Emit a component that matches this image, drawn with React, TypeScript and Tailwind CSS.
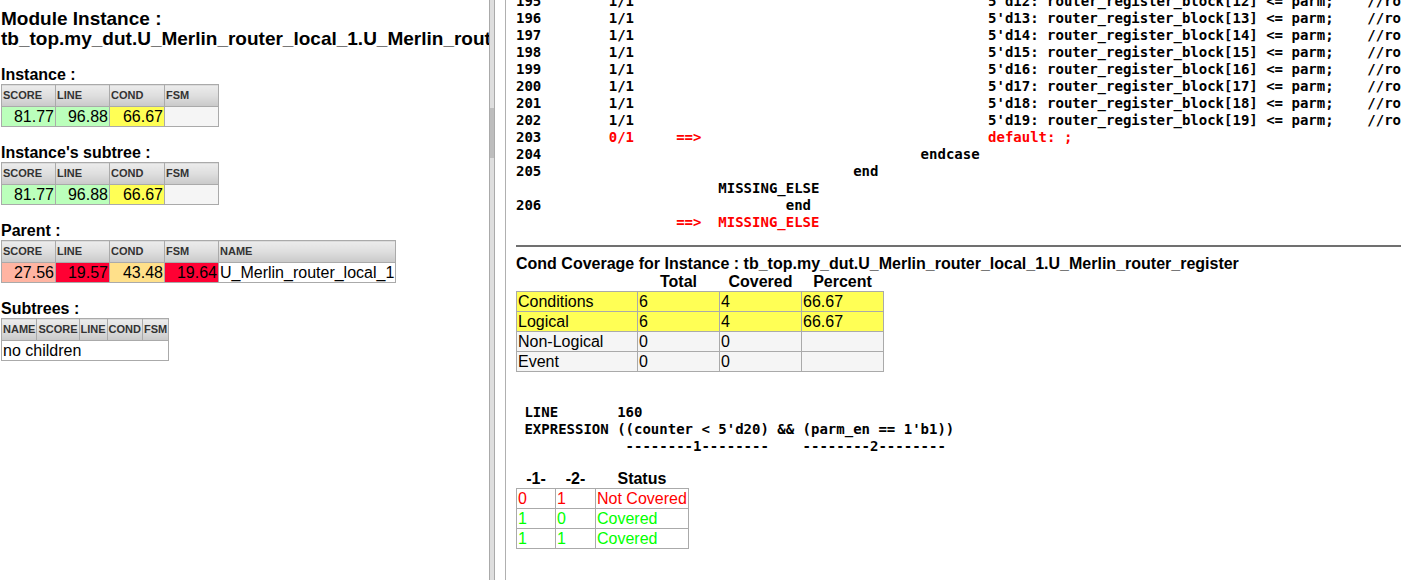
import React from "react";

const sans = "font-['Liberation_Sans',Arial,sans-serif]";
const mono = "font-['DejaVu_Sans_Mono',monospace]";

const sp = (n: number) => " ".repeat(n);
const pad = (s: string, n: number) => s.padEnd(n, " ");

type CodeRow = { no: string; cov: string; arrow?: boolean; code: string; red?: boolean };

const codeRows: CodeRow[] = [
  ...[12, 13, 14, 15, 16, 17, 18, 19].map((n, i) => ({
    no: String(195 + i),
    cov: "1/1",
    code: sp(32) + `5'd${n}: router_register_block[${n}] <= parm;    //router_register_block[${n}]`,
  })),
  { no: "203", cov: "0/1", arrow: true, code: sp(32) + "default: ;", red: true },
  { no: "204", cov: "", code: sp(24) + "endcase" },
  { no: "205", cov: "", code: sp(16) + "end" },
  { no: "", cov: "", code: "MISSING_ELSE" },
  { no: "206", cov: "", code: sp(8) + "end" },
  { no: "", cov: "", arrow: true, code: "MISSING_ELSE", red: true },
];

const thCls =
  "border border-[#aaaaaa] bg-gradient-to-b from-[#ececec] via-[#dedede] to-[#c9c9c9] text-left text-[11px] leading-[13px] font-bold text-[#333] px-[1px] py-[4px]";
const tdNum = "border border-[#aaaaaa] text-right text-[16px] leading-[19px] px-[1px]";

const Label = ({ children }: { children: React.ReactNode }) => (
  <div className="mt-[17px] text-[16px] leading-[18px] font-bold">{children}</div>
);

const ScoreTable = ({ parent }: { parent?: boolean }) => (
  <table className="border-collapse">
    <thead>
      <tr>
        <th className={`${thCls} w-[54px]`}>SCORE</th>
        <th className={`${thCls} w-[54px]`}>LINE</th>
        <th className={`${thCls} w-[55px]`}>COND</th>
        <th className={`${thCls} w-[54px]`}>FSM</th>
        {parent && <th className={thCls}>NAME</th>}
      </tr>
    </thead>
    <tbody>
      {parent ? (
        <tr>
          <td className={`${tdNum} bg-[#ffb4a2]`}>27.56</td>
          <td className={`${tdNum} bg-[#ff0033]`}>19.57</td>
          <td className={`${tdNum} bg-[#ffe08a]`}>43.48</td>
          <td className={`${tdNum} bg-[#ff0033]`}>19.64</td>
          <td className="border border-[#aaaaaa] text-left text-[16px] leading-[19px] px-[1px] bg-white">
            U_Merlin_router_local_1
          </td>
        </tr>
      ) : (
        <tr>
          <td className={`${tdNum} bg-[#bbffbb]`}>81.77</td>
          <td className={`${tdNum} bg-[#bbffbb]`}>96.88</td>
          <td className={`${tdNum} bg-[#ffff55]`}>66.67</td>
          <td className={`${tdNum} bg-[#f5f5f5]`}></td>
        </tr>
      )}
    </tbody>
  </table>
);

const condRows = [
  { name: "Conditions", total: "6", cov: "4", pct: "66.67", bg: "bg-[#ffff55]" },
  { name: "Logical", total: "6", cov: "4", pct: "66.67", bg: "bg-[#ffff55]" },
  { name: "Non-Logical", total: "0", cov: "0", pct: "", bg: "bg-[#f5f5f5]" },
  { name: "Event", total: "0", cov: "0", pct: "", bg: "bg-[#f5f5f5]" },
];

const statusRows = [
  { a: "0", b: "1", s: "Not Covered", c: "text-[#ff0000]" },
  { a: "1", b: "0", s: "Covered", c: "text-[#00ff00]" },
  { a: "1", b: "1", s: "Covered", c: "text-[#00ff00]" },
];

const cell = "border border-[#aaaaaa] text-left text-[16px] leading-[19px] px-[1px]";

export default function App() {
  return (
    <div className={`${sans} flex w-[1401px] h-[580px] overflow-hidden bg-white text-black`}>
      {/* left frame */}
      <div className="w-[489px] shrink-0 overflow-hidden whitespace-nowrap pl-[1px] pt-[9px]">
        <h3 className="text-[19px] leading-[20px] font-bold">
          Module Instance :
          <br />
          tb_top.my_dut.U_Merlin_router_local_1.U_Merlin_router_register
        </h3>
        <Label>Instance :</Label>
        <ScoreTable />
        <Label>Instance's subtree :</Label>
        <ScoreTable />
        <Label>Parent :</Label>
        <ScoreTable parent />
        <Label>Subtrees :</Label>
        <table className="border-collapse">
          <thead>
            <tr>
              <th className={thCls}>NAME</th>
              <th className={thCls}>SCORE</th>
              <th className={thCls}>LINE</th>
              <th className={thCls}>COND</th>
              <th className={thCls}>FSM</th>
            </tr>
          </thead>
          <tbody>
            <tr>
              <td colSpan={5} className={cell}>
                no children
              </td>
            </tr>
          </tbody>
        </table>
      </div>

      {/* scrollbar */}
      <div className="w-[6px] shrink-0 h-full border-x border-[#aaaaaa] bg-[#dedede]">
        <div className="mt-[108px] h-[50px] bg-[#bdbdbd]" />
      </div>

      {/* right frame */}
      <div className="ml-[10px] flex-1 h-full border-l border-[#b0b0b0] overflow-hidden pl-[10px]">
        <div className={`${mono} -mt-[7px] text-[14px] leading-[17px] font-bold whitespace-pre`}>
          {codeRows.map((r, i) => (
            <div key={i}>
              {pad(r.no, 11)}
              <span className={r.red ? "text-[#ff0000]" : ""}>{pad(r.cov, 8)}</span>
              <span className="text-[#ff0000]">{r.arrow ? "==>  " : "     "}</span>
              <span className={r.red ? "text-[#ff0000]" : ""}>{r.code}</span>
            </div>
          ))}
        </div>

        <div className="mt-[14px] h-[2px] border-t-2 border-[#707070]" />

        <div className="mt-[8px] text-[16px] leading-[18px] font-bold whitespace-nowrap">
          Cond Coverage for Instance : tb_top.my_dut.U_Merlin_router_local_1.U_Merlin_router_register
        </div>
        <table className="border-collapse text-[16px]">
          <thead>
            <tr>
              <th className="w-[121px] leading-[18px]"></th>
              <th className="w-[82px] leading-[18px] font-bold text-center">Total</th>
              <th className="w-[82px] leading-[18px] font-bold text-center">Covered</th>
              <th className="w-[82px] leading-[18px] font-bold text-center">Percent</th>
            </tr>
          </thead>
          <tbody>
            {condRows.map((r) => (
              <tr key={r.name} className={r.bg}>
                <td className={cell}>{r.name}</td>
                <td className={cell}>{r.total}</td>
                <td className={cell}>{r.cov}</td>
                <td className={cell}>{r.pct}</td>
              </tr>
            ))}
          </tbody>
        </table>

        <div className={`${mono} mt-[32px] text-[14px] leading-[17px] font-bold whitespace-pre`}>
          <div>{" LINE       160"}</div>
          <div>{" EXPRESSION ((counter < 5'd20) && (parm_en == 1'b1))"}</div>
          <div>{sp(13) + "--------1--------" + sp(4) + "--------2--------"}</div>
        </div>

        <table className="mt-[14px] border-collapse text-[16px]">
          <thead>
            <tr>
              <th className="w-[39px] leading-[19px] font-bold text-center">-1-</th>
              <th className="w-[40px] leading-[19px] font-bold text-center">-2-</th>
              <th className="w-[92px] leading-[19px] font-bold text-center">Status</th>
            </tr>
          </thead>
          <tbody>
            {statusRows.map((r, i) => (
              <tr key={i} className={r.c}>
                <td className={cell}>{r.a}</td>
                <td className={cell}>{r.b}</td>
                <td className={`${cell} whitespace-nowrap`}>{r.s}</td>
              </tr>
            ))}
          </tbody>
        </table>
      </div>
    </div>
  );
}
